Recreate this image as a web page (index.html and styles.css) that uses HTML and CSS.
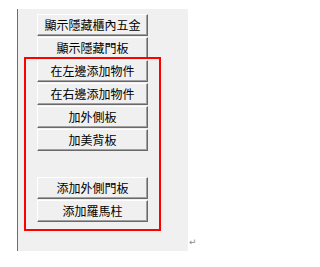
FILE: index.html
```html
<!DOCTYPE html>
<html>
<head>
<meta charset="utf-8">
<link rel="stylesheet" href="styles.css">
</head>
<body>
<div class="page">
  <div class="panel">
    <div class="buttons">
      <div class="btn">顯示隱藏櫃內五金</div>
      <div class="btn">顯示隱藏門板</div>
      <div class="btn">在左邊添加物件</div>
      <div class="btn">在右邊添加物件</div>
      <div class="btn">加外側板</div>
      <div class="btn">加美背板</div>
      <div class="btn btn-gap">添加外側門板</div>
      <div class="btn">添加羅馬柱</div>
    </div>
    <div class="highlight"></div>
  </div>
  <span class="para">↵</span>
</div>
</body>
</html>
```
FILE: styles.css
```css
html, body {
  margin: 0;
  padding: 0;
  background: #ffffff;
}
.page {
  display: flex;
  align-items: flex-end;
  padding: 9px 0 0 17px;
}
.panel {
  position: relative;
  width: 171px;
  height: 242px;
  box-sizing: border-box;
  background: #f0f0f0;
  border-left: 1px solid #6e6e6e;
  padding: 5px 0 0 19px;
}
.buttons {
  display: flex;
  flex-direction: column;
  gap: 1px;
}
.btn {
  width: 111px;
  height: 22px;
  box-sizing: border-box;
  background: #f0f0f0;
  border-top: 1px solid #ffffff;
  border-left: 1px solid #ffffff;
  border-right: 1px solid #696969;
  border-bottom: 1px solid #696969;
  box-shadow: inset -1px -1px 0 #a0a0a0;
  font-family: "Noto Sans CJK TC", "Noto Sans CJK SC", sans-serif;
  font-size: 12px;
  line-height: 19px;
  text-align: center;
  color: #000000;
}
.btn-gap {
  margin-top: 25px;
}
.highlight {
  position: absolute;
  left: 6px;
  top: 48px;
  width: 137px;
  height: 174px;
  box-sizing: border-box;
  border: 2px solid #ff0000;
}
.para {
  font-family: "DejaVu Sans", sans-serif;
  font-size: 9px;
  line-height: 12px;
  color: #8a8a8a;
  margin-left: 1px;
  margin-bottom: 3px;
}
```
